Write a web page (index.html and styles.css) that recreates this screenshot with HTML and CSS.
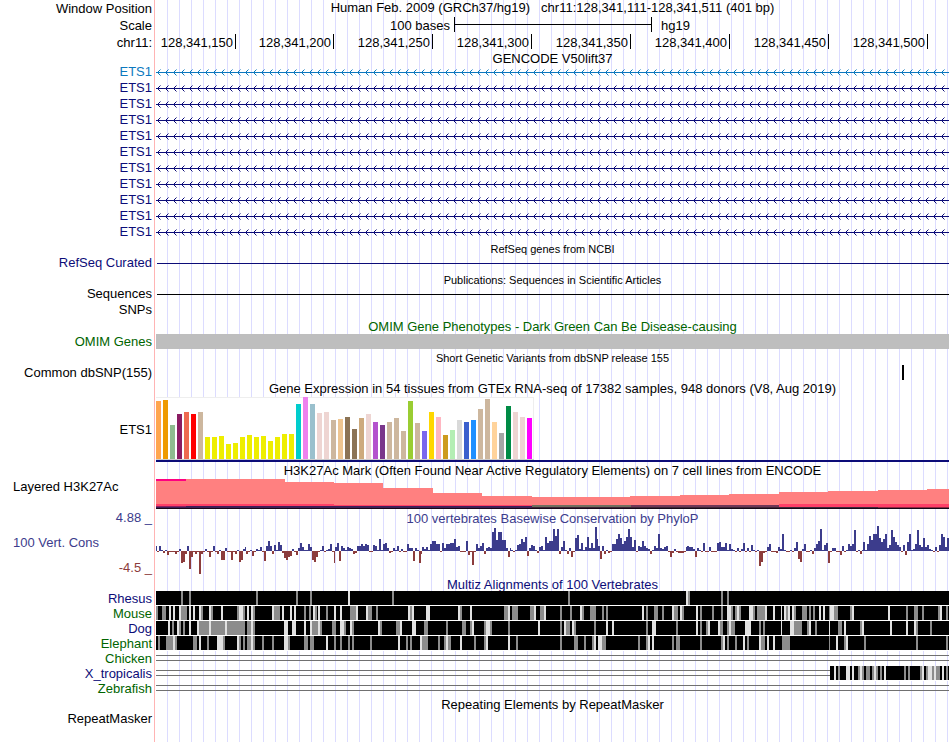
FILE: index.html
```html
<!DOCTYPE html>
<html lang="en">
<head>
<meta charset="utf-8">
<title>Human chr11:128,341,111-128,341,511 genome tracks</title>
<link rel="stylesheet" href="styles.css">
</head>
<body>
<svg class="defs" aria-hidden="true">
  <defs>
    <pattern id="strand-canonical" width="8" height="16" patternUnits="userSpaceOnUse">
      <path d="M0 8.5H8M4.5 5.5L1.5 8.5L4.5 11.5" fill="none" stroke="#0c78be"/>
    </pattern>
    <pattern id="strand" width="8" height="16" patternUnits="userSpaceOnUse">
      <path d="M0 8.5H8M4.5 5.5L1.5 8.5L4.5 11.5" fill="none" stroke="#0c0c78"/>
    </pattern>
  </defs>
</svg>
<main class="browser">
  <div class="row tall"><div class="label">Window Position</div><div class="track position"><span>Human Feb. 2009 (GRCh37/hg19)</span><span class="region">chr11:128,341,111-128,341,511 (401 bp)</span></div></div>
  <div class="row tall"><div class="label">Scale</div><div class="track scale"><span class="scale-from">100 bases</span><span class="scale-bar"></span><span>hg19</span></div></div>
  <div class="row coordinates"><div class="label">chr11:</div><div class="track ruler"><span>128,341,150</span><span>128,341,200</span><span>128,341,250</span><span>128,341,300</span><span>128,341,350</span><span>128,341,400</span><span>128,341,450</span><span>128,341,500</span></div></div>

  <div class="row shorter"><div class="label"></div><h2 class="track title">GENCODE V50lift37</h2></div>
  <div id="genes"></div>

  <div class="row short"><div class="label"></div><h2 class="track title small">RefSeq genes from NCBI</h2></div>
  <div class="row navy"><div class="label">RefSeq Curated</div><div class="track line"></div></div>
  <div class="row short"><div class="label"></div><h2 class="track title small">Publications: Sequences in Scientific Articles</h2></div>
  <div class="row"><div class="label">Sequences</div><div class="track line"></div></div>
  <div class="row"><div class="label">SNPs</div><div class="track"></div></div>

  <div class="row green"><div class="label"></div><h2 class="track title">OMIM Gene Phenotypes - Dark Green Can Be Disease-causing</h2></div>
  <div class="row short green"><div class="label">OMIM Genes</div><div class="track omim"></div></div>

  <div class="row"><div class="label"></div><h2 class="track title small">Short Genetic Variants from dbSNP release 155</h2></div>
  <div class="row short"><div class="label">Common dbSNP(155)</div><div class="track"><svg viewBox="0 0 793 15" preserveAspectRatio="none"><path d="M746 0h2v15h-2z"/></svg></div></div>

  <div class="row tall"><div class="label"></div><h2 class="track title">Gene Expression in 54 tissues from GTEx RNA-seq of 17382 samples, 948 donors (V8, Aug 2019)</h2></div>
  <div class="row expression"><div class="label">ETS1</div><div class="track"><svg id="gtex" viewBox="0 0 793 65" preserveAspectRatio="none">
    <path fill="#fff" d="M0 0h378v62H0z"/>
    <path fill="#eee" d="M0 0h378v62h-1V1H0z"/>
    <path fill="#ccc" d="M0 62h378v1H0z"/>
    <path fill="#0c0c78" d="M0 63h793v2H0z"/>
  </svg></div></div>

  <div class="row tall"><div class="label"></div><h2 class="track title">H3K27Ac Mark (Often Found Near Active Regulatory Elements) on 7 cell lines from ENCODE</h2></div>
  <div class="row histone"><div class="label start">Layered H3K27Ac</div><div class="track"><svg viewBox="0 0 793 31" preserveAspectRatio="none">
    <path fill="#ff8080" d="M0 0H129V3H178V4H227V9H277V14H326V17H376V18H474V17H524V16H573V15H623V13H672V12H722V11H771V10H793V27H0z"/>
    <path fill="#ff0080" d="M0 0h30v2H0z"/>
    <path fill="#ff4068" d="M0 25h178v1h198v1H0zM623 25h170v3H623z"/>
    <path fill="#707060" d="M376 26h99v2h-99z"/>
    <path fill="#703858" d="M475 26h148v2H475z"/>
    <path fill="#902060" d="M0 27h30v1H0z"/>
    <path fill="#402058" d="M30 27h346v1H30zM0 28h376v1H0z"/>
    <path fill="#402838" d="M376 28h346v1H376z"/>
    <path fill="#902840" d="M722 28h71v1h-71z"/>
    <path fill="#180818" d="M0 29h793v1H0z"/>
  </svg></div></div>

  <div class="row purple"><div class="label">4.88 _</div><h2 class="track title">100 vertebrates Basewise Conservation by PhyloP</h2></div>
  <div class="row conservation purple"><div class="label limits"><span class="name">100 Vert. Cons</span><span class="low">-4.5 _</span></div><div class="track"><svg id="phylop" viewBox="0 0 793 50" preserveAspectRatio="none"></svg></div></div>

  <div class="row short navy"><div class="label"></div><h2 class="track title">Multiz Alignments of 100 Vertebrates</h2></div>
  <div id="alignments"></div>

  <div class="row short"><div class="label"></div><h2 class="track title">Repeating Elements by RepeatMasker</h2></div>
  <div class="row short"><div class="label">RepeatMasker</div><div class="track"></div></div>
</main>
<script src="tracks.js"></script>
</body>
</html>
```
FILE: styles.css
```css
* {
  box-sizing: border-box;
}

body {
  margin: 0;
  background: #fff;
  color: #000;
  font: 13px/16px "Liberation Sans", Arial, Helvetica, sans-serif;
}

.defs {
  position: absolute;
  width: 0;
  height: 0;
}

.browser {
  display: flex;
  flex-direction: column;
  min-height: 100vh;
  padding-right: 1px;
  background:
    linear-gradient(#ffb4b4, #ffb4b4) 154px 0 / 1px 100% no-repeat,
    repeating-linear-gradient(to right, transparent 0 11px, #dcdcff 11px 12px) 156px 0 no-repeat;
}

.row {
  display: grid;
  grid-template-columns: 152px minmax(0, 1fr);
  column-gap: 4px;
  height: 16px;
  line-height: 16px;
  white-space: nowrap;
}

.row.shorter {
  height: 14px;
}

.row.short {
  height: 15px;
  line-height: 15px;
}

.row.tall {
  height: 17px;
  line-height: 17px;
}

.row.coordinates {
  line-height: 18px;
}

.label {
  text-align: right;
}

.label.start {
  padding-left: 13px;
  text-align: left;
}

.track svg {
  display: block;
  width: 100%;
  height: 100%;
  shape-rendering: crispEdges;
}

.title {
  margin: 0;
  font-size: 13px;
  font-weight: normal;
  line-height: 18px;
  text-align: center;
}

.title.small {
  font-size: 11px;
}

.position {
  line-height: 16px;
  text-align: center;
}

.region {
  margin-left: 11px;
}

.navy { color: #0c0c78; }
.canonical { color: #0c78be; }
.green { color: #006400; }
.purple { color: #3c3c8c; }

.scale {
  display: grid;
  grid-template-columns: 298fr 198fr 297fr;
}

.scale-from {
  padding-right: 4px;
  text-align: right;
}

.scale-bar {
  height: 15px;
  border: solid #000;
  border-width: 0 1px;
  background: linear-gradient(#000, #000) 0 7px / 100% 1px no-repeat;
}

.scale-bar + span {
  padding-left: 9px;
}

.ruler {
  display: grid;
  grid-template-columns: 80fr 98fr repeat(6, 99fr) 21fr;
}

.ruler span {
  height: 15px;
  padding-right: 2px;
  border-right: 1px solid #000;
  text-align: right;
}

.line {
  background: linear-gradient(currentColor, currentColor) 1px 8px / 100% 1px no-repeat;
}

.omim {
  background: #bebebe;
}

.row.expression {
  height: 65px;
  line-height: 65px;
}

.row.histone {
  height: 31px;
}

.row.conservation {
  height: 50px;
}

.limits {
  display: flex;
  flex-direction: column;
  justify-content: space-between;
  padding: 9px 0 0;
}

.limits .name {
  padding-left: 13px;
  text-align: left;
}

.limits .low {
  color: #8c3c3c;
}
```
FILE: tracks.js
```js
const SVG = 'http://www.w3.org/2000/svg';

function shape(svg, fill, d) {
  const path = document.createElementNS(SVG, 'path');
  path.setAttribute('fill', fill);
  path.setAttribute('d', d);
  svg.append(path);
}

function addRow(parent, className, name) {
  const row = document.createElement('div');
  row.className = 'row ' + className;
  const label = document.createElement('div');
  label.className = 'label';
  label.textContent = name;
  const track = document.createElement('div');
  track.className = 'track';
  const svg = document.createElementNS(SVG, 'svg');
  track.append(svg);
  row.append(label, track);
  parent.append(row);
  return svg;
}

// Transcripts of the gene, all on the reverse strand.
const genes = document.getElementById('genes');
for (let i = 0; i < 11; i++) {
  const svg = addRow(genes, i ? 'navy' : 'canonical', 'ETS1');
  svg.style.shapeRendering = 'auto';
  const rect = document.createElementNS(SVG, 'rect');
  rect.setAttribute('width', '100%');
  rect.setAttribute('height', '16');
  rect.setAttribute('fill', i ? 'url(#strand)' : 'url(#strand-canonical)');
  svg.append(rect);
}

// Median expression per tissue: colour and bar height.
const tissues = `ffa54f 58,ee9a00 59,8fbc8f 34,8b1c62 45,ee6a50 47,ff0000 45,cdb79e 47,
eeee00 22,eeee00 22,eeee00 23,eeee00 15,eeee00 16,eeee00 22,eeee00 24,eeee00 22,eeee00 23,eeee00 18,eeee00 22,eeee00 25,eeee00 25,
00cdcd 55,ee82ee 62,9ac0cd 55,eed5d2 46,eed5d2 47,cdb79e 39,eec591 40,8b7355 42,8b7355 30,cdaa7d 41,eed5d2 45,b452cd 37,7a378b 34,
cdb79e 37,cdb79e 41,cdb79e 28,9acd32 58,cdb79e 36,7a67ee 28,ffd700 47,ffb6c1 42,cd9b1d 24,b4eeb4 29,d9d9d9 39,3a5fcd 37,1e90ff 39,
cdb79e 50,cdb79e 60,ffd39b 37,a6a6a6 26,008b45 53,eed5d2 47,eed5d2 42,ff00ff 41`.split(',');
tissues.forEach((item, i) => {
  const [colour, h] = item.trim().split(' ');
  shape(document.getElementById('gtex'), '#' + colour, `M${i * 7} ${62 - h}h5v${h}h-5z`);
});

// Conservation score of each of the 401 bases.
const scores = `5 -1 5 1 -2 1 -4 -1 -1 -1 -3 -1 2 -12 -11 -3 5 -18 -6 -1
-3 -1 -23 -3 -1 2 -1 -6 -1 5 -1 -3 1 -9 -9 3 -1 -1 -9 -1
-3 1 -11 -9 2 4 -3 -1 1 -5 -1 2 1 4 -1 -10 5 10 5 -3
6 1 9 6 -2 -7 -9 -6 -5 2 -1 -4 3 8 4 1 1 7 4 -9
-11 -6 -1 1 5 -1 1 2 7 -1 -12 4 8 -10 5 3 1 4 3 2
-3 -2 5 5 7 5 7 6 -1 -1 6 5 1 12 1 7 8 3 -2 -1
3 1 5 -1 2 -1 -1 7 3 3 -10 3 1 -12 -3 4 2 4 1 7
10 10 7 7 -1 8 3 7 7 8 8 12 4 5 -1 -1 -1 10 -4 -1
-14 -1 7 3 5 8 -3 3 4 3 19 23 11 19 19 11 11 3 -6 3
1 -1 1 6 7 12 9 14 -5 3 6 5 1 -2 4 5 1 14 8 10
10 22 15 22 -3 4 10 1 -3 3 -6 -1 13 16 2 8 1 4 14 3
8 3 24 12 5 -8 5 -3 1 -2 -1 7 7 12 17 13 7 10 14 22
14 4 11 -1 5 4 10 5 3 2 -3 1 5 3 17 3 2 4 5 -1
-6 -2 2 -1 -2 -2 -2 -1 4 5 4 4 2 -6 3 1 -1 8 -1 -1
4 -1 -1 -1 8 9 4 4 8 1 7 2 1 -1 3 -1 2 8 -1 3
-1 6 1 -1 1 -15 -11 -2 -1 4 7 -1 -1 -1 -2 4 2 17 1 -1
-1 1 -1 3 9 -8 -11 2 7 -1 -1 1 -3 3 7 10 22 1 6 8
-12 -1 3 3 -1 -1 -4 5 -1 1 7 5 7 21 -1 1 -3 1 9 1
7 15 11 17 17 25 13 9 12 17 3 6 21 14 9 6 4 -1 6 -4
9 17 1 2 7 21 6 4 13 4 6 2 1 -1 4 -1 6 17 14 4 13`.split(/\s+/).map(Number);
const edge = i => i ? Math.floor(i * 793 / 401 + 0.02) : 0;
let above = '';
let below = '';
scores.forEach((s, i) => {
  const x = edge(i);
  const w = edge(i + 1) - x;
  if (s > 0) above += `M${x} ${25 - s}h${w}v${s}h-${w}z`;
  else below += `M${x} 25h${w}v${-s}h-${w}z`;
});
const phylop = document.getElementById('phylop');
shape(phylop, '#3c3c8c', above);
shape(phylop, '#8c3c3c', below);

// Aligned species: black is a match, grey and light spans (x:width) are weaker columns.
const species = [
  ['Rhesus', 'navy', 0,
   '25:2 33:2 100:2 140:2 154:2 236:2 412:2 532:2 565:2 571:2',
   '192:2 530:2'],
  ['Mouse', 'green', 0,
   '0:2 6:4 25:6 45:2 55:2 81:2 87:2 97:2 118:6 148:2 153:2 159:2 170:2 194:6 212:4 220:2 254:2 304:2 348:4 356:6 374:4 384:4 404:2 414:2 426:2 434:6 446:2 450:2 490:2 498:4 506:2 518:4 526:2 544:2 556:2 565:2 575:2 579:2 583:2 597:2 601:8 630:2 638:2 646:5 653:2 657:2 673:1 678:4 694:2 750:2 758:4 766:2 782:2 790:2',
   '13:2 17:2 23:2 33:2 37:2 43:2 53:2 65:2 83:4 91:2 95:2 116:2 126:2 134:2 138:2 157:2 162:2 178:2 184:2 200:2 210:2 252:2 256:2 270:4 302:2 314:2 352:2 378:2 388:2 424:2 486:2 516:2 524:2 540:2 571:4 581:2 593:4 609:2 617:2 625:1 628:2 632:2 636:2 663:2 667:2 674:4 696:2 732:2 784:2'],
  ['Dog', 'navy', 0,
   '16:2 23:2 27:2 43:10 55:14 71:18 91:4 97:2 156:6 164:2 176:4 188:2 196:2 224:2 240:4 268:4 290:2 306:4 314:2 328:2 334:2 352:2 404:2 410:4 418:2 438:2 490:2 520:2 544:2 550:2 564:3 571:2 575:4 603:2 607:2 638:8 651:2 659:2 682:4 704:2 760:2 774:2',
   '12:2 21:2 33:2 41:2 53:2 69:2 95:2 128:4 136:4 148:2 154:2 162:2 184:4 194:2 222:2 244:2 256:4 316:2 330:4 382:2 408:2 416:2 450:2 456:2 496:4 540:2 552:2 562:2 573:2 589:6 625:1 634:4 653:2 673:1 688:2 706:2 734:2 750:2 758:2'],
  ['Elephant', 'green', 0,
   '2:2 10:7 19:2 37:4 51:2 67:2 83:2 87:2 91:4 97:2 106:2 116:2 132:2 148:4 154:4 178:2 184:2 192:2 196:2 214:2 250:2 254:2 266:6 282:2 288:2 292:3 318:2 328:2 360:2 404:2 418:4 428:2 436:2 446:4 482:2 490:2 516:2 520:4 544:2 565:2 571:2 579:2 591:2 605:4 626:8 673:1 688:2 708:2 760:2 790:2',
   '17:2 43:2 61:6 81:2 95:2 128:4 170:2 242:2 264:2 290:2 304:2 330:2 352:2 438:2 442:4 492:2 496:2 567:2 587:2 603:2 611:2 617:2 680:2 690:2'],
  ['Chicken', 'green', 793, '', ''],
  ['X_tropicalis', 'navy', 674,
   '682:2 702:2 706:2 710:4 716:2 720:2 724:2 748:2 752:2 764:2 770:2 776:2 780:4 790:2',
   '678:2 690:4 696:2 704:2 718:2 728:2 766:2 772:4 778:2 786:2'],
  ['Zebrafish', 'green', 793, '', '']
];
const spans = text => text.split(' ').filter(Boolean).map(item => {
  const [x, w] = item.split(':');
  return `M${x} 0h${w}v14h-${w}z`;
}).join('');
const alignments = document.getElementById('alignments');
for (const [name, colour, start, grey, light] of species) {
  const svg = addRow(alignments, 'short ' + colour, name);
  svg.setAttribute('viewBox', '0 0 793 15');
  svg.setAttribute('preserveAspectRatio', 'none');
  if (start) shape(svg, '#707070', `M0 4h${start}v1H0zM0 9h${start}v1H0z`);
  if (start < 793) {
    shape(svg, '#fff', `M${start} 14H793v1H${start}z`);
    shape(svg, '#000', `M${start} 0H793v14H${start}z`);
    shape(svg, '#8c8c8c', spans(grey));
    shape(svg, '#e1e1e1', spans(light));
  }
}
```
